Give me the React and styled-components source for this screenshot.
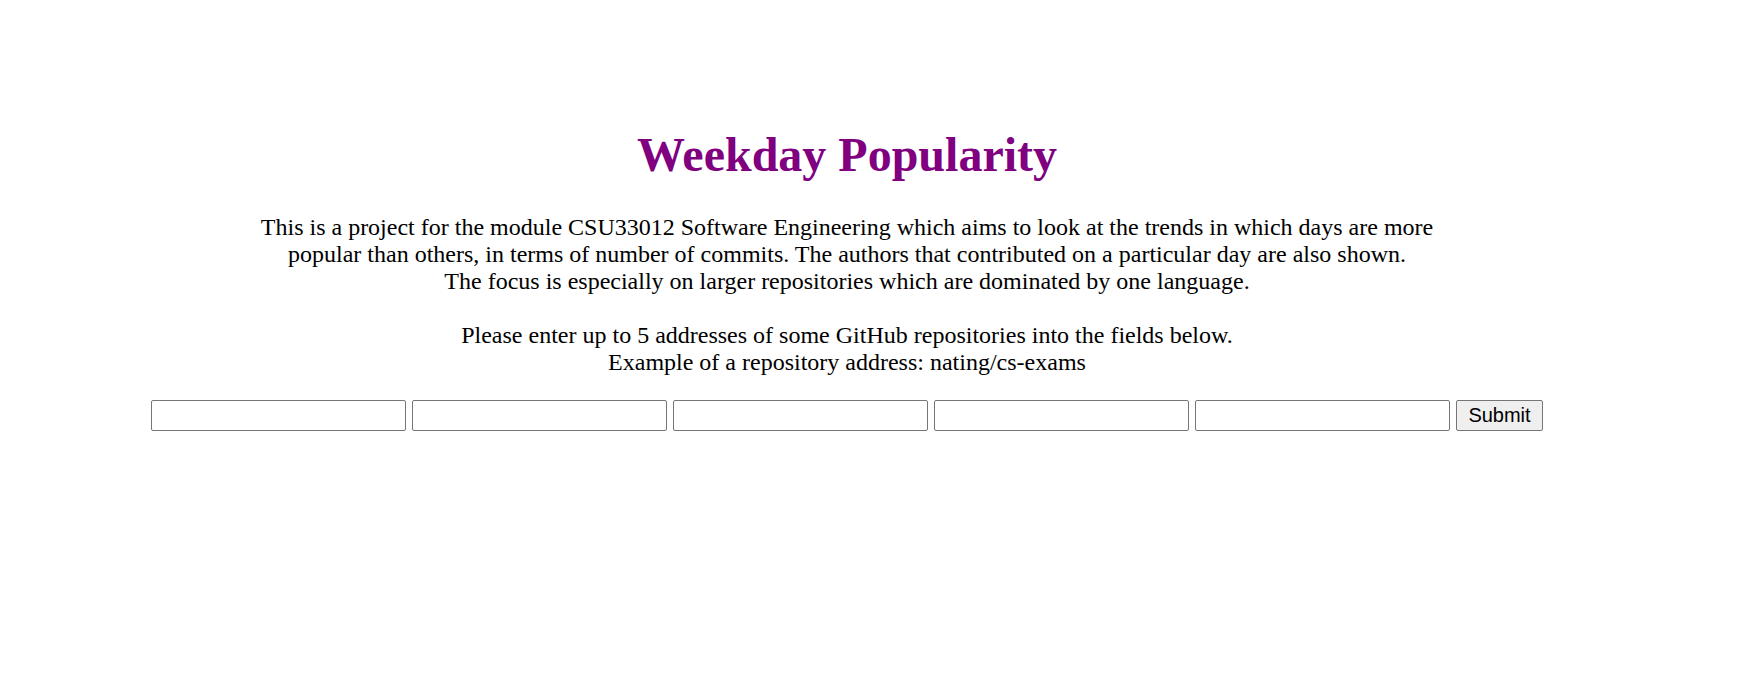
import styled, { createGlobalStyle } from "styled-components";

const GlobalStyles = createGlobalStyle`
  html, body {
    margin: 0;
    padding: 0;
    background: #ffffff;
  }
  body {
    font-family: "Liberation Serif", "Times New Roman", serif;
    font-size: 24px;
    color: #000000;
  }
`;

const Page = styled.main`
  padding: 95px 69px 0 12px;
  text-align: center;
`;

const Title = styled.h1`
  margin: 32px 0;
  font-size: 48px;
  font-weight: bold;
  color: #800080;
`;

const Intro = styled.p`
  margin: 24px 0;
  line-height: 27px;
`;

const RepoForm = styled.form`
  display: flex;
  justify-content: center;
  align-items: center;
  gap: 6px;
`;

const RepoInput = styled.input`
  box-sizing: border-box;
  width: 255px;
  height: 31px;
  padding: 1px 3px;
  border: 1px solid #767676;
  border-radius: 2px;
  background: #ffffff;
  font-family: "Liberation Sans", Arial, sans-serif;
  font-size: 20px;
`;

const SubmitButton = styled.button`
  box-sizing: border-box;
  width: 87px;
  height: 31px;
  padding: 1px 9px;
  border: 1px solid #767676;
  border-radius: 2px;
  background: #efefef;
  color: #000000;
  font-family: "Liberation Sans", Arial, sans-serif;
  font-size: 20px;
`;

export default function App() {
  return (
    <>
      <GlobalStyles />
      <Page>
        <Title>Weekday Popularity</Title>
        <Intro>
          This is a project for the module CSU33012 Software Engineering which aims to look at the trends in which days are more
          <br />
          popular than others, in terms of number of commits. The authors that contributed on a particular day are also shown.
          <br />
          The focus is especially on larger repositories which are dominated by one language.
          <br />
          <br />
          Please enter up to 5 addresses of some GitHub repositories into the fields below.
          <br />
          Example of a repository address: nating/cs-exams
        </Intro>
        <RepoForm onSubmit={(e) => e.preventDefault()}>
          {[0, 1, 2, 3, 4].map((i) => (
            <RepoInput key={i} type="text" />
          ))}
          <SubmitButton type="submit">Submit</SubmitButton>
        </RepoForm>
      </Page>
    </>
  );
}
